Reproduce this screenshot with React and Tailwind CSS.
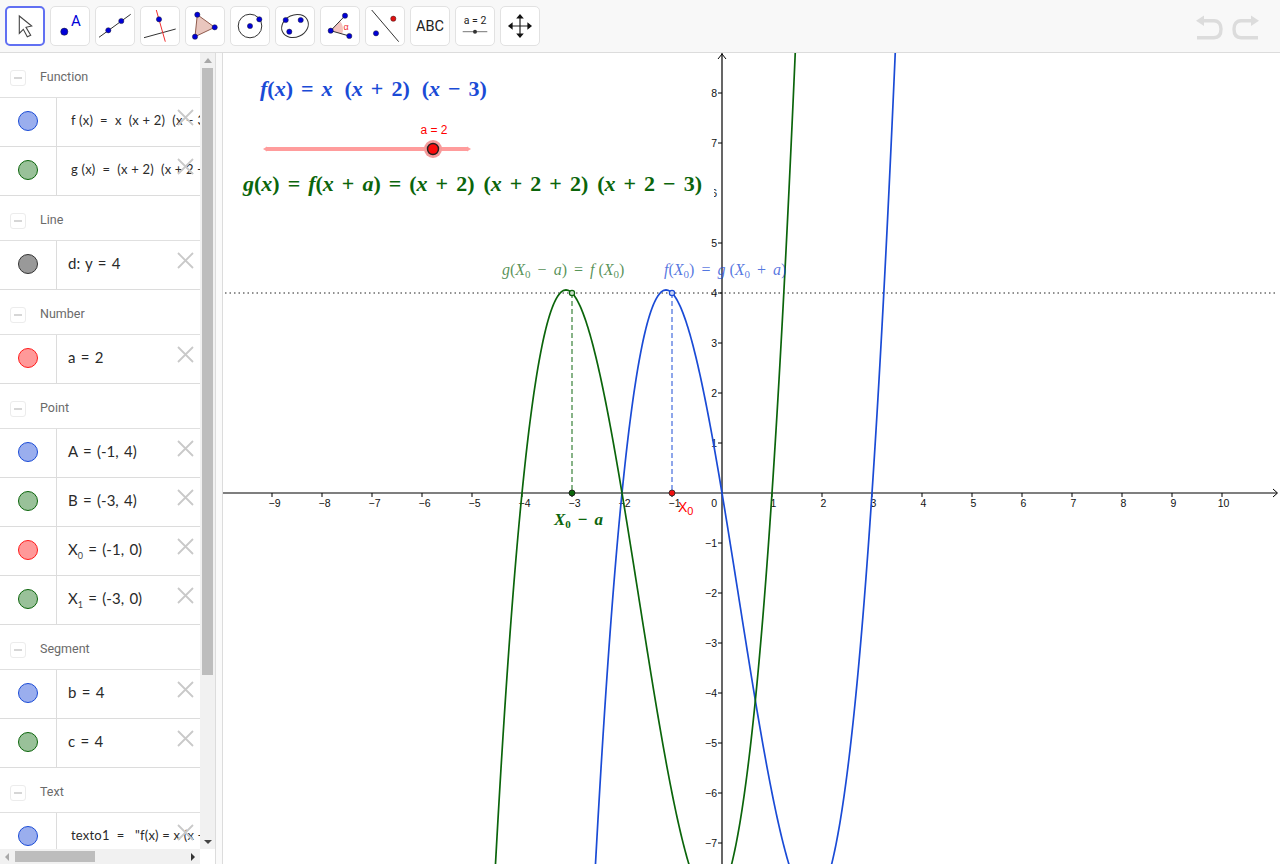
import React from "react";

const C = {
  blue: { fill: "#9aaeee", stroke: "#1a4bd6" },
  green: { fill: "#99c199", stroke: "#0b650b" },
  gray: { fill: "#999999", stroke: "#333333" },
  red: { fill: "#ff9999", stroke: "#ff1a1a" },
};

function Dot({ x, y, r = 2.6 }) {
  return <circle cx={x} cy={y} r={r} fill="#0000d8" stroke="#223" strokeWidth="0.5" />;
}

function ToolIcon({ n }) {
  switch (n) {
    case 0:
      return <polygon points="14.3,10 26.7,20 21,21.3 25.7,29.3 22.3,30.7 18.3,23.3 14.3,27.3" fill="#fff" stroke="#444" strokeWidth="1.1" />;
    case 1:
      return (
        <>
          <circle cx="14.3" cy="25.7" r="3.6" fill="#0000d8" stroke="#222" strokeWidth="0.5" />
          <text x="26" y="20" textAnchor="middle" fontSize="15" fill="#0000d8" fontFamily="Roboto, sans-serif">A</text>
        </>
      );
    case 2:
      return (
        <>
          <line x1="4" y1="31.3" x2="35.7" y2="8.3" stroke="#333" strokeWidth="1" />
          <Dot x={13.3} y={24.3} />
          <Dot x={26.3} y={15} />
        </>
      );
    case 3:
      return (
        <>
          <line x1="4" y1="31.7" x2="35.7" y2="23" stroke="#333" strokeWidth="1" />
          <line x1="16.3" y1="4" x2="25.3" y2="35.7" stroke="#f03030" strokeWidth="1" />
          <Dot x={19} y={13.3} />
        </>
      );
    case 4:
      return (
        <>
          <polygon points="12.3,8.7 29.7,21.3 10,30.7" fill="#e9c6be" stroke="#8f5b4d" strokeWidth="1" />
          <Dot x={12.3} y={8.7} />
          <Dot x={29.7} y={21.3} />
          <Dot x={10} y={30.7} />
        </>
      );
    case 5:
      return (
        <>
          <circle cx="20" cy="20" r="11.8" fill="none" stroke="#333" strokeWidth="1" />
          <Dot x={20} y={20} />
          <Dot x={29.3} y={13.3} />
        </>
      );
    case 6:
      return (
        <>
          <ellipse cx="20" cy="20" rx="13.8" ry="11" transform="rotate(-25 20 20)" fill="none" stroke="#333" strokeWidth="1" />
          <Dot x={10.7} y={14} />
          <Dot x={25.7} y={14} />
          <Dot x={14.3} y={25.7} />
        </>
      );
    case 7:
      return (
        <>
          <path d="M10.7 24.7 L20 15 A13 13 0 0 1 22 28 Z" fill="#f4c4c0" stroke="none" />
          <line x1="10.7" y1="24.7" x2="25" y2="9.7" stroke="#333" strokeWidth="1" />
          <line x1="10.7" y1="24.7" x2="29.3" y2="30" stroke="#333" strokeWidth="1" />
          <text x="26" y="23.5" textAnchor="middle" fontSize="9" fill="#f03030" fontFamily="'Liberation Sans', sans-serif">α</text>
          <Dot x={10.7} y={24.7} />
          <Dot x={25} y={9.7} />
          <Dot x={29.3} y={30} />
        </>
      );
    case 8:
      return (
        <>
          <line x1="6.7" y1="4" x2="33.7" y2="35.7" stroke="#333" strokeWidth="1" />
          <Dot x={11} y={27.3} />
          <circle cx="28.3" cy="12.7" r="2.6" fill="#e01010" stroke="#322" strokeWidth="0.5" />
        </>
      );
    case 9:
      return <text x="20" y="25.3" textAnchor="middle" fontSize="14.5" fill="#222" fontFamily="Roboto, sans-serif">ABC</text>;
    case 10:
      return (
        <>
          <text x="20" y="18" textAnchor="middle" fontSize="10.5" fill="#222" fontFamily="Roboto, sans-serif">a = 2</text>
          <line x1="7.7" y1="25.7" x2="32.3" y2="25.7" stroke="#777" strokeWidth="1" />
          <circle cx="20" cy="25.7" r="2" fill="#333" />
        </>
      );
    default:
      return (
        <>
          <path d="M20 11 V29 M11 20 H29" stroke="#222" strokeWidth="1.2" fill="none" />
          <polygon points="20,8 16.2,12.6 23.8,12.6" fill="#111" />
          <polygon points="20,32 16.2,27.4 23.8,27.4" fill="#111" />
          <polygon points="8,20 12.6,16.2 12.6,23.8" fill="#111" />
          <polygon points="32,20 27.4,16.2 27.4,23.8" fill="#111" />
        </>
      );
  }
}

function Toolbar() {
  const tools = [0, 1, 2, 3, 4, 5, 6, 7, 8, 9, 10, 11];
  return (
    <div className="h-[53px] shrink-0 bg-[#f8f8f8] border-b border-[#dcdcdc] flex items-start justify-between pl-[5px] pt-[6px]">
      <div className="flex gap-[5px]">
        {tools.map((n) => (
          <div
            key={n}
            className={
              n === 0
                ? "w-10 h-10 rounded-[5px] bg-white border-2 border-[#6170f2]"
                : "w-10 h-10 rounded-[5px] bg-white border border-[#e2e2e2]"
            }
          >
            <svg width="40" height="40" viewBox="0 0 40 40" className={n === 0 ? "-m-[2px] block" : "-m-px block"}>
              <ToolIcon n={n} />
            </svg>
          </div>
        ))}
      </div>
      <svg width="90" height="30" viewBox="0 0 90 30" className="mt-[9px] block">
        <g fill="none" stroke="#dcdcdc" strokeWidth="3.4">
          <path d="M13 5.7 H24 C29 5.7 31 10 31 14 C31 19 29 22.7 24 22.7 H7" />
          <path d="M62 5.7 H51 C46 5.7 44 10 44 14 C44 19 46 22.7 51 22.7 H68" />
        </g>
        <polygon points="6,5.7 14,0.5 14,11" fill="#dcdcdc" />
        <polygon points="69,5.7 61,0.5 61,11" fill="#dcdcdc" />
      </svg>
    </div>
  );
}

function Header({ children }) {
  return (
    <div className="h-[45px] shrink-0 border-b border-[#e0e0e0] flex items-center pl-[10px] pt-[5px]">
      <div className="w-[16px] h-[16px] rounded-[3px] border border-[#ececec] flex items-center justify-center">
        <div className="w-[8px] h-[2px] bg-[#d6d6d6]" />
      </div>
      <span className="ml-[14px] text-[12.5px] text-[#6a6a6a] font-['Roboto',sans-serif]">{children}</span>
    </div>
  );
}

function Row({ color, small, children }) {
  const c = C[color];
  return (
    <div className="relative h-[49px] shrink-0 border-b border-[#dcdcdc] flex overflow-hidden">
      <div className="w-[57px] shrink-0 border-r border-[#dcdcdc] flex items-center justify-center pb-[3px]">
        <div className="w-[20px] h-[20px] rounded-full border" style={{ background: c.fill, borderColor: c.stroke }} />
      </div>
      <div
        className={
          small
            ? "pl-[14px] pb-[2px] whitespace-pre flex items-center text-[13px] tracking-[0.2px] text-[#2a2a2a]"
            : "pl-[11px] pb-[4px] whitespace-pre flex items-center text-[15px] [word-spacing:1.5px] text-[#2a2a2a]"
        }
      >
        <span>{children}</span>
      </div>
      <svg width="17" height="17" viewBox="0 0 17 17" className="absolute left-[177px] top-[11px]">
        <path d="M1 1 L16 16 M16 1 L1 16" stroke="#c9c9c9" strokeWidth="1.8" />
      </svg>
    </div>
  );
}

function Sub({ children }) {
  return <span className="text-[9px] relative top-[4px] text-[#444]">{children}</span>;
}

function Algebra() {
  return (
    <div className="w-[223px] shrink-0 flex flex-col border-r border-[#dcdcdc]">
      <div className="flex-1 flex min-h-0">
        <div className="w-[200px] shrink-0 flex flex-col overflow-hidden font-['Lato',sans-serif]">
          <Header>Function</Header>
          <Row color="blue" small>f (x)  =  x  (x + 2)  (x − 3)</Row>
          <Row color="green" small>g (x)  =  (x + 2)  (x + 2 + 2)</Row>
          <Header>Line</Header>
          <Row color="gray">d: y = 4</Row>
          <Header>Number</Header>
          <Row color="red">a = 2</Row>
          <Header>Point</Header>
          <Row color="blue">A = (-1, 4)</Row>
          <Row color="green">B = (-3, 4)</Row>
          <Row color="red">X<Sub>0</Sub> = (-1, 0)</Row>
          <Row color="green">X<Sub>1</Sub> = (-3, 0)</Row>
          <Header>Segment</Header>
          <Row color="blue">b = 4</Row>
          <Row color="green">c = 4</Row>
          <Header>Text</Header>
          <Row color="blue" small>texto1  =   "f(x) = x (x + 2)</Row>
        </div>
        <div className="w-[15px] shrink-0 bg-[#f1f1f1] flex flex-col items-center relative">
          <div className="mt-[5px] w-0 h-0 border-x-[4px] border-x-transparent border-b-[5px] border-b-[#a8a8a8]" />
          <div className="mt-[5px] w-[11px] ml-[-1px] h-[607px] bg-[#bdbdbd]" />
          <div className="mt-auto mb-[5px] w-0 h-0 border-x-[4px] border-x-transparent border-t-[4px] border-t-[#444]" />
        </div>
        <div className="w-[7px] shrink-0 border-l border-[#dcdcdc] bg-[#fafafa]" />
      </div>
      <div className="h-[15px] shrink-0 flex">
        <div className="w-[200px] h-[15px] bg-[#f1f1f1] flex items-center relative">
          <div className="ml-[5px] w-0 h-0 border-y-[4px] border-y-transparent border-r-[4px] border-r-[#a8a8a8]" />
          <div className="ml-[6px] w-[80px] h-[11px] bg-[#bdbdbd]" />
          <div className="ml-auto mr-[5px] w-0 h-0 border-y-[4px] border-y-transparent border-l-[4px] border-l-[#333]" />
        </div>
        <div className="w-[15px]" />
        <div className="w-[7px] border-l border-[#dcdcdc] bg-[#fafafa]" />
      </div>
    </div>
  );
}

const OX = 499; // x = 0, relative to graph (722 - 223)
const OY = 440; // y = 0, relative to graph (493 - 53)
const U = 50;

function curve(fn) {
  let d = "";
  for (let px = 0; px <= 1056; px += 1) {
    const x = (px - OX) / U;
    const py = OY - fn(x) * U;
    if (py < -200 || py > 1100) {
      if (d && !d.endsWith("|")) d += "|";
      continue;
    }
    d += (d === "" || d.endsWith("|") ? "M" : "L") + px + " " + py.toFixed(2) + " ";
  }
  return d.replace(/\|/g, "");
}

const f = (x) => x * (x + 2) * (x - 3);
const g = (x) => (x + 2) * (x + 4) * (x - 1);

/* Math: italic letters, upright digits/parens, spaced operators */
function V({ children }) {
  return <span className="italic">{children}</span>;
}
function Op({ children }) {
  return <span className="mx-[8px]">{children}</span>;
}
function Ot({ children }) {
  return <span className="mx-[7px]">{children}</span>;
}
function S0() {
  return <sub className="text-[11px] not-italic">0</sub>;
}

function Graph() {
  const xs = [-9, -8, -7, -6, -5, -4, -3, -2, -1, 1, 2, 3, 4, 5, 6, 7, 8, 9, 10];
  const ys = [8, 7, 6, 5, 4, 3, 2, 1, -1, -2, -3, -4, -5, -6, -7];
  const tick = { fontFamily: "'Liberation Sans', sans-serif", fontSize: 10.5, fill: "#111" };
  const bold = "absolute whitespace-pre font-bold font-['Liberation_Serif',serif] text-[22px] leading-[26px]";
  const thin = "absolute whitespace-pre font-['Liberation_Serif',serif] text-[16px] leading-[20px]";
  return (
    <div className="relative flex-1 bg-white overflow-hidden">
      <svg width="1057" height="811" viewBox="0 0 1057 811" className="block">
        <line x1="2" y1={OY - 200} x2="1055" y2={OY - 200} stroke="#222" strokeWidth="1" strokeDasharray="1.5 3" />
        <line x1={OX} y1="0" x2={OX} y2="811" stroke="#000" strokeWidth="1.2" />
        <line x1="0" y1={OY} x2="1054" y2={OY} stroke="#000" strokeWidth="1.2" />
        <path d={`M${OX - 4} 6 L${OX} 1 L${OX + 4} 6`} stroke="#000" fill="none" />
        <path d={`M1050 ${OY - 4} L1054.5 ${OY} L1050 ${OY + 4}`} stroke="#000" fill="none" />
        {xs.map((v) => (
          <g key={v}>
            <line x1={OX + v * U} y1={OY} x2={OX + v * U} y2={OY + 4} stroke="#000" />
            <text x={OX + v * U + (v < 0 ? 2.5 : 1.5)} y={OY + 14} textAnchor="middle" {...tick}>{v < 0 ? "−" + -v : v}</text>
          </g>
        ))}
        {ys.map((v) => (
          <g key={v}>
            {v !== 6 && <line x1={OX - 4} y1={OY - v * U} x2={OX} y2={OY - v * U} stroke="#000" />}
            <text x={OX - 5} y={OY - v * U + 4} textAnchor="end" {...tick}>{v < 0 ? "−" + -v : v}</text>
          </g>
        ))}
        <text x={OX - 5} y={OY + 14} textAnchor="end" {...tick}>0</text>

        <line x1={349} y1={OY - 200} x2={349} y2={OY} stroke="#0b650b" strokeOpacity="0.65" strokeWidth="1.5" strokeDasharray="5 3" />
        <line x1={449} y1={OY - 200} x2={449} y2={OY} stroke="#1a4bd6" strokeOpacity="0.65" strokeWidth="1.5" strokeDasharray="5 3" />

        <path d={curve(f)} fill="none" stroke="#1a4bd6" strokeWidth="1.7" />
        <path d={curve(g)} fill="none" stroke="#0b650b" strokeWidth="1.7" />

        <circle cx={449} cy={OY - 200} r="2.6" fill="#c9d4f6" stroke="#1a4bd6" strokeWidth="1.2" />
        <circle cx={349} cy={OY - 200} r="2.6" fill="#c6dcc6" stroke="#0b650b" strokeWidth="1.2" />
        <circle cx={349} cy={OY} r="3" fill="#0b650b" stroke="#111" strokeWidth="0.8" />
        <circle cx={449} cy={OY} r="3" fill="#f01010" stroke="#222" strokeWidth="0.8" />

        <line x1="43" y1="96" x2="245" y2="96" stroke="#ff9c9c" strokeWidth="4" />
        <polygon points="40,96 44,93.5 44,98.5" fill="#ff9c9c" />
        <polygon points="248,96 244,93.5 244,98.5" fill="#ff9c9c" />
        <circle cx="210" cy="96" r="9" fill="#f59a9a" />
        <circle cx="210" cy="96" r="5.5" fill="#fa0c0c" stroke="#222" strokeWidth="1.4" />
        <text x="211" y="81" textAnchor="middle" fontSize="12" fill="#ff0000" fontFamily="'Liberation Sans', sans-serif">a = 2</text>
        <text x="455" y="459" fontSize="14" fill="#ff0000" fontFamily="'Liberation Sans', sans-serif">X<tspan fontSize="11" dy="3">0</tspan></text>
      </svg>

      <div className={bold + " left-[37px] top-[23px] text-[#1a4bd6]"}>
        <V>f</V>(<V>x</V>)<Op>=</Op><V>x</V><span className="inline-block w-[12px]" />(<V>x</V><Op>+</Op>2)<span className="inline-block w-[12px]" />(<V>x</V><Op>−</Op>3)
      </div>
      <div className={bold + " left-[20px] top-[118px] w-[471px] bg-white text-[#0b650b]"}>
        <V>g</V>(<V>x</V>)<Op>=</Op><V>f</V>(<V>x</V><Op>+</Op><V>a</V>)<Op>=</Op>(<V>x</V><Op>+</Op>2)<span className="inline-block w-[9px]" />(<V>x</V><Op>+</Op>2<Op>+</Op>2)<span className="inline-block w-[9px]" />(<V>x</V><Op>+</Op>2<Op>−</Op>3)
      </div>
      <div className={thin + " left-[279px] top-[207px] text-[#0b650b]/70"}>
        <V>g</V>(<V>X</V><S0 /><Ot>−</Ot><V>a</V>)<Ot>=</Ot><V>f</V> (<V>X</V><S0 />)
      </div>
      <div className={thin + " left-[441px] top-[207px] text-[#1a4bd6]/75"}>
        <V>f</V>(<V>X</V><S0 />)<Ot>=</Ot><V>g</V> (<V>X</V><S0 /><Ot>+</Ot><V>a</V>)
      </div>
      <div className={thin + " left-[331px] top-[457px] font-bold text-[17px] text-[#0b650b]"}>
        <V>X</V><S0 /><Ot>−</Ot><V>a</V>
      </div>
    </div>
  );
}

export default function App() {
  return (
    <div className="w-[1280px] h-[866px] overflow-hidden bg-white flex flex-col pb-[2px] font-['Roboto',sans-serif]">
      <Toolbar />
      <div className="flex-1 flex min-h-0">
        <Algebra />
        <Graph />
      </div>
    </div>
  );
}
